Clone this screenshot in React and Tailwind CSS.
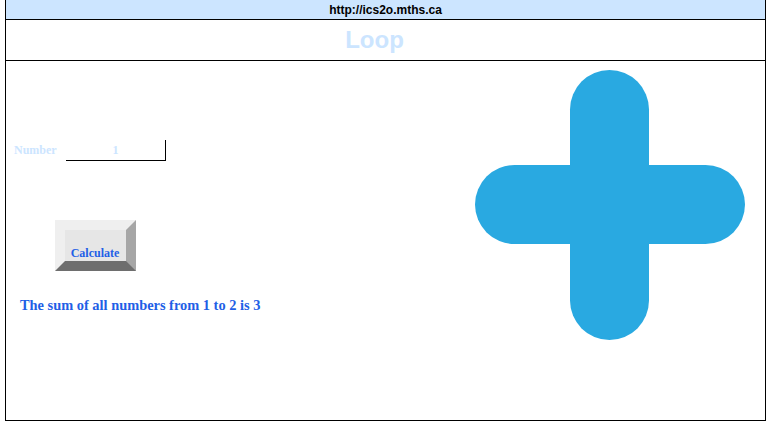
export default function App() {
  const serif = { fontFamily: '"Liberation Serif", serif' };
  return (
    <div className="w-[766px] h-[421px] bg-white overflow-hidden">
      <div className="ml-[5px] w-[761px] border-x border-black" style={{ fontFamily: '"Liberation Sans", Arial, sans-serif' }}>
        <div className="h-[20px] bg-[#cce5ff] border-b border-black flex items-center justify-center text-[12px] font-bold text-black leading-none">
          http://ics2o.mths.ca
        </div>
        <div className="h-[41px] border-b border-black flex items-center justify-center pr-[22px]">
          <span className="text-[24px] font-bold text-[#cce5ff] leading-none">Loop</span>
        </div>
        <div className="h-[360px] border-b border-black flex justify-between" style={serif}>
          <div className="flex flex-col pl-[8px]">
            <div className="mt-[79px] flex items-end h-[21px]">
              <span className="text-[12px] font-bold text-[#cce5ff] leading-none mb-[5px] w-[52px]">Number</span>
              <div className="w-[100px] h-[21px] border-b border-r border-black flex items-end justify-center pb-[4px]">
                <span className="text-[12px] font-bold text-[#cce5ff] leading-none">1</span>
              </div>
            </div>
            <div
              className="mt-[59px] ml-[41px] w-[81px] h-[51px] bg-[#e6e6e6] border-[10px] border-solid border-t-[#efefef] border-l-[#efefef] border-r-[#a6a6a6] border-b-[#6e6e6e] flex items-center justify-center"
            >
              <span className="text-[12px] font-bold text-[#1f5fe6] leading-none mt-[15px] mr-[1px]">Calculate</span>
            </div>
            <div className="mt-[27px] ml-[6px] text-[14.4px] font-bold text-[#1f5fe6] leading-none">
              The sum of all numbers from 1 to 2 is 3
            </div>
          </div>
          <div className="pt-[9px] pr-[20px]">
            <svg width="270" height="270" viewBox="0 0 270 270">
              <rect x="95" y="0" width="79" height="270" rx="39.5" fill="#29a9e1" />
              <rect x="0" y="95" width="270" height="79" rx="39.5" fill="#29a9e1" />
            </svg>
          </div>
        </div>
      </div>
    </div>
  );
}
